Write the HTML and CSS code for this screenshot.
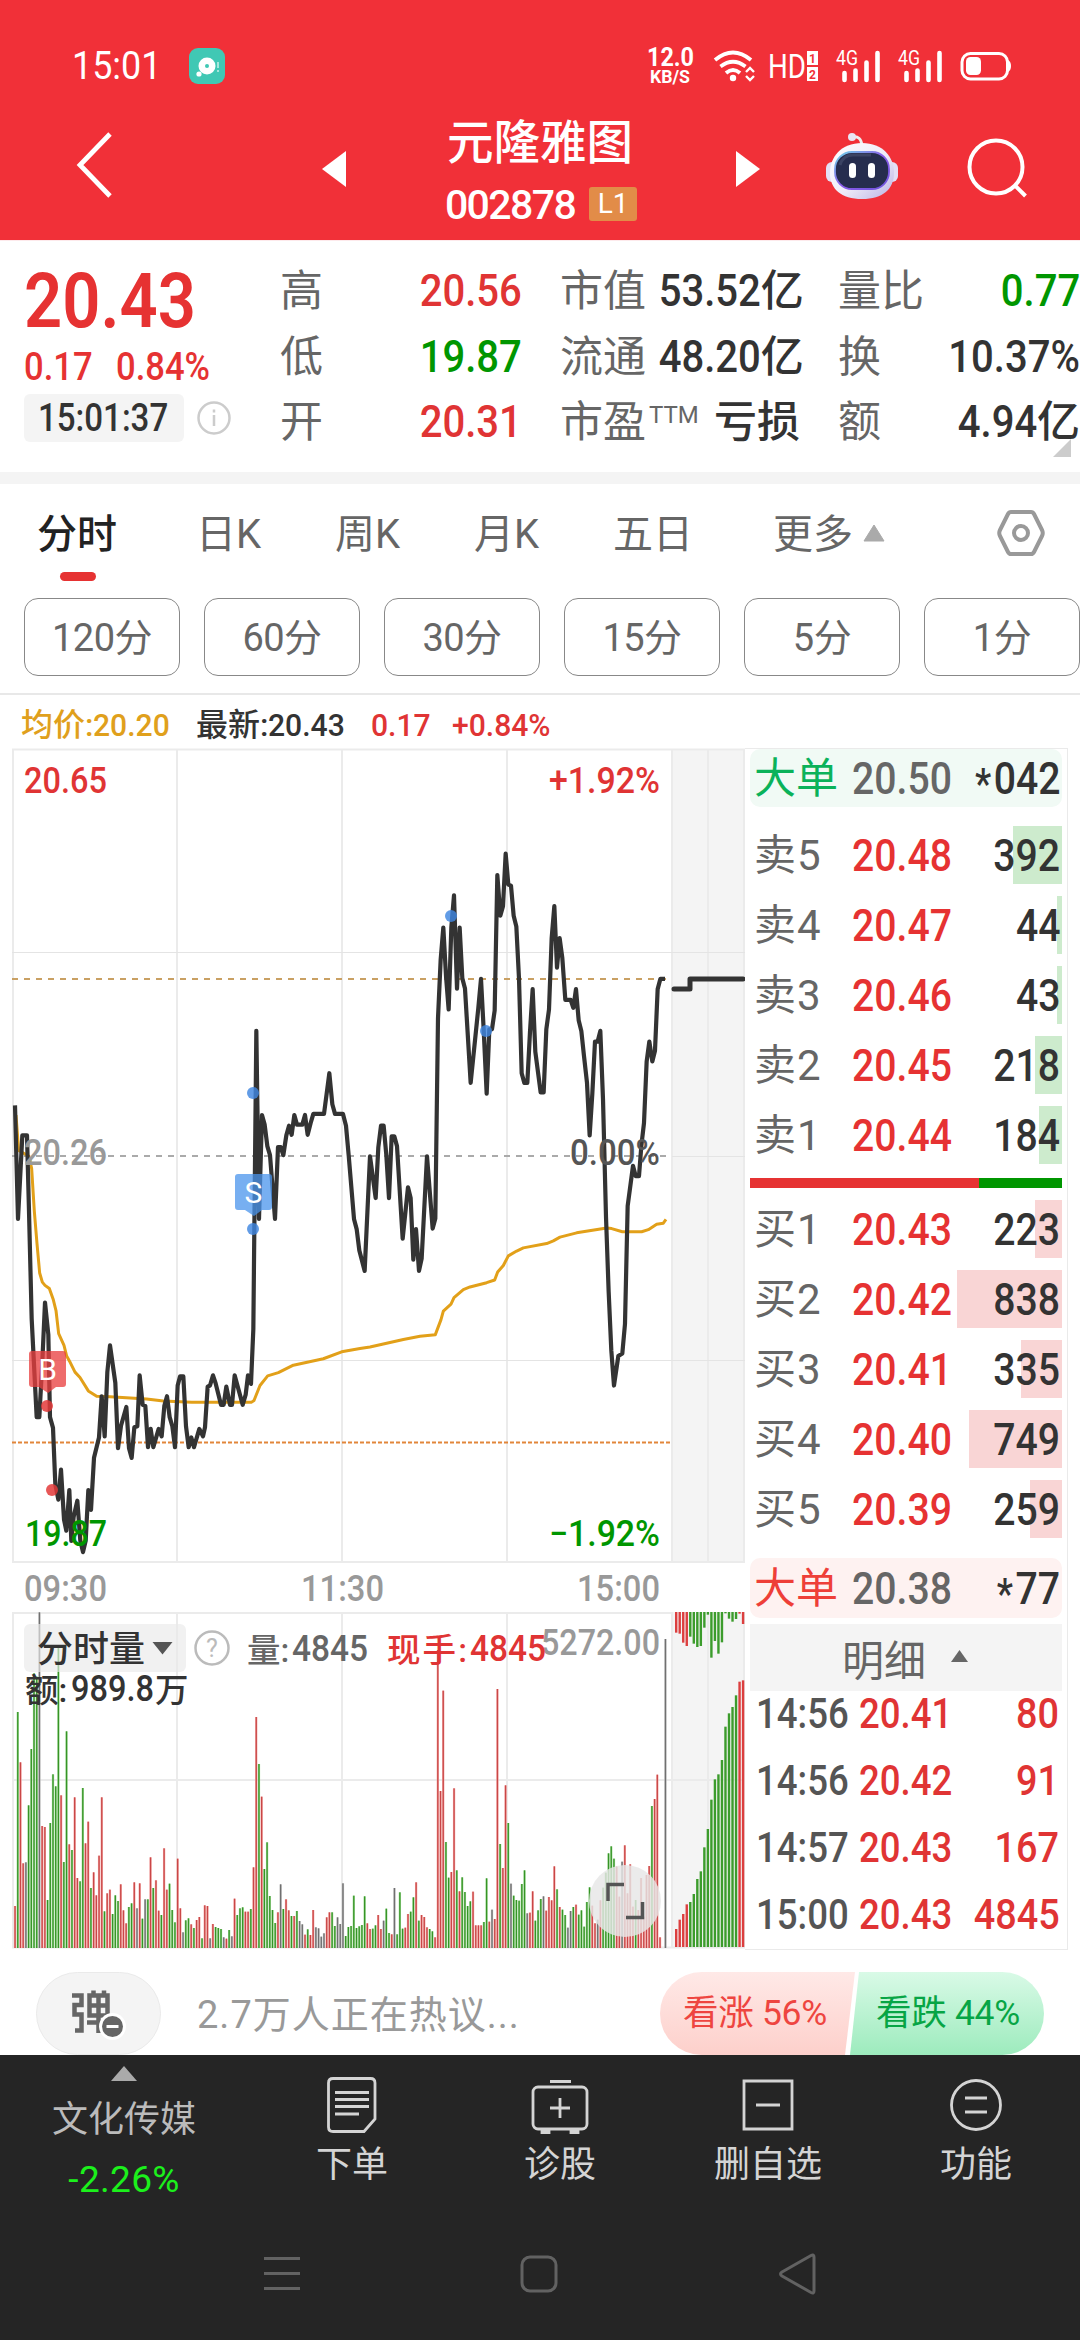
FILE: index.html
```html
<!DOCTYPE html>
<html lang="zh-CN">
<head>
<meta charset="utf-8">
<title>元隆雅图 002878</title>
<link rel="stylesheet" href="styles.css">
</head>
<body>
<header class="top">
  <div class="status">
    <span class="clock"><span class="num">15:01</span></span>
    <svg class="app" width="36" height="36" viewBox="0 0 36 36"><rect width="36" height="36" rx="9" fill="#40c8b4"/><circle cx="18" cy="18" r="8.5" fill="#fff"/><circle cx="18" cy="18" r="2" fill="#40c8b4"/><circle cx="10" cy="26" r="2.6" fill="#fff"/><path d="M29 14v6M29 22v2" stroke="#bfeee6" stroke-width="1.6"/></svg>
    <svg class="signals" width="370" height="44" viewBox="645 44 370 44" fill="#fff">
      <g font-family="Roboto, sans-serif" font-weight="700"><text x="647" y="66" font-size="25" textLength="47" lengthAdjust="spacingAndGlyphs">12.0</text><text x="650" y="83" font-size="18.5" textLength="40" lengthAdjust="spacingAndGlyphs">KB/S</text></g>
      <g fill="none" stroke="#fff" stroke-width="3.8"><path d="M715 60Q733 45 751 60M720.500 66.500Q733 57 745.500 66.500M726 73Q733 67 740 73"/><path d="M746 72l4-4 4 4M746 76l4 4 4-4" stroke-width="2.4"/></g>
      <circle cx="733" cy="78" r="3.2"/>
      <text x="768" y="78" font-family="Roboto, sans-serif" font-size="34" textLength="38" lengthAdjust="spacingAndGlyphs">HD</text>
      <rect x="807" y="51" width="11" height="14"/><rect x="807" y="67" width="11" height="14"/>
      <g fill="#f13038" font-family="Roboto, sans-serif" font-size="12" font-weight="700"><text x="809" y="62.500">1</text><text x="809" y="78.500">2</text></g>
      <g id="cell"><text x="836" y="65" font-family="Roboto, sans-serif" font-size="20.500" textLength="22" lengthAdjust="spacingAndGlyphs">4G</text><path d="M844.500 73v7M855.500 70.500v9.500M866.500 62.500v17.500M877.500 53v27" stroke="#fff" stroke-width="4.600" stroke-linecap="round"/></g>
      <use href="#cell" x="62"/>
      <rect x="962" y="53.500" width="45.500" height="25.500" rx="8.500" fill="none" stroke="#fff" stroke-width="3"/><rect x="966" y="57" width="15" height="18" rx="4.500"/><path d="M1008 60q3 1.500 3 6t-3 6z"/>
    </svg>
  </div>
  <div class="titlebar">
    <svg class="back" width="40" height="68" viewBox="0 0 40 68"><path d="M37 3L7 34l30 31" fill="none" stroke="#fff" stroke-width="4.800"/></svg>
    <svg class="prev" width="24" height="36" viewBox="0 0 24 36"><path d="M0 18L24 0v36z" fill="#fff"/></svg>
    <div class="name"><h1>元隆雅图</h1><p><span class="code">002878</span><span class="level">L1</span></p></div>
    <svg class="next" width="24" height="36" viewBox="0 0 24 36"><path d="M24 18L0 0v36z" fill="#fff"/></svg>
    <svg class="robot" width="76" height="70" viewBox="0 0 76 70">
      <defs><linearGradient id="shell" x2="1" y2="1"><stop offset="0" stop-color="#fff"/><stop offset=".55" stop-color="#eeebf8"/><stop offset="1" stop-color="#b9b2e4"/></linearGradient><linearGradient id="rim" x2="1" y2="1"><stop offset="0" stop-color="#6fd6e8"/><stop offset=".5" stop-color="#8a5be8"/><stop offset="1" stop-color="#6f54dd"/></linearGradient></defs>
      <path d="M28 6q9-2 10 9" fill="none" stroke="#eee" stroke-width="3"/><circle cx="28" cy="6" r="4" fill="#e9e6f3"/>
      <rect x="2" y="31" width="72" height="20" rx="6" fill="#e3dff5"/>
      <path d="M38 12C59 12 70 26 70 42 70 58 59 68 38 68S6 58 6 42C6 26 17 12 38 12z" fill="url(#shell)"/>
      <rect x="11" y="21" width="54" height="37" rx="17" fill="#262d4e" stroke="url(#rim)" stroke-width="1.800"/>
      <path d="M16 34q3-10 13-10h18" stroke="#4a5172" stroke-width="3" fill="none" opacity=".6"/>
      <rect x="25" y="32" width="7" height="15" rx="3.500" fill="#fff"/><rect x="44" y="32" width="7" height="15" rx="3.500" fill="#fff"/>
    </svg>
    <svg class="search" width="64" height="64" viewBox="0 0 64 64" fill="none" stroke="#fff" stroke-width="4"><circle cx="31" cy="31" r="26.500"/><path d="M49.500 49l11 11"/></svg>
  </div>
</header>

<section class="quote">
  <div class="last">
    <strong class="num">20.43</strong>
    <p class="change"><span class="num">0.17</span><span class="num">0.84%</span></p>
    <p class="stamp"><time><span class="num">15:01:37</span></time><svg width="34" height="34" viewBox="0 0 34 34" fill="none" stroke="#ccc" stroke-width="2.500"><circle cx="17" cy="17" r="15.500"/><path d="M17 14v11M17 8.500v3"/></svg></p>
  </div>
  <dl class="stats">
    <div><dt>高</dt><dd class="up"><span class="num">20.56</span></dd></div><div><dt>市值</dt><dd><span class="num">53.52</span>亿</dd></div><div><dt>量比</dt><dd class="down"><span class="num">0.77</span></dd></div>
    <div><dt>低</dt><dd class="down"><span class="num">19.87</span></dd></div><div><dt>流通</dt><dd><span class="num">48.20</span>亿</dd></div><div><dt>换</dt><dd><span class="num">10.37%</span></dd></div>
    <div><dt>开</dt><dd class="up"><span class="num">20.31</span></dd></div><div><dt>市盈<sup>TTM</sup></dt><dd>亏损</dd></div><div><dt>额</dt><dd><span class="num">4.94</span>亿</dd></div>
  </dl>
  <svg class="corner" width="18" height="18"><path d="M18 0v18H0z" fill="#ccc"/></svg>
</section>

<nav class="tabs">
  <span class="on">分时</span><span>日K</span><span>周K</span><span>月K</span><span>五日</span><span>更多<svg width="22" height="18"><path d="M11 1l10 16H1z" fill="#aaa" stroke="#aaa" stroke-linejoin="round"/></svg></span>
  <svg class="gear" width="50" height="48" viewBox="0 0 50 48" fill="none" stroke="#999" stroke-width="4"><path d="M15 3h20q2 0 3 2l8 16q1.500 3 0 6l-8 16q-1 2-3 2H15q-2 0-3-2L4 27q-1.500-3 0-6l8-16q1-2 3-2z"/><circle cx="25" cy="24" r="7"/></svg>
</nav>
<div class="chips"><span>120分</span><span>60分</span><span>30分</span><span>15分</span><span>5分</span><span>1分</span></div>
<div class="legend">
  <span class="avg">均价:<span class="num">20.20</span></span><span>最新:<span class="num">20.43</span></span><span class="up"><span class="num">0.17</span></span><span class="up"><span class="num">+0.84%</span></span>
</div>

<main class="board">
  <svg class="chart" width="745" height="1205" viewBox="0 746 745 1205">
    <rect x="671" y="749" width="74" height="813" fill="#f4f4f4"/><rect x="671" y="1612" width="74" height="336" fill="#f4f4f4"/>
    <g class="grid">
      <path d="M13 749V1562M177 749V1562M342 749V1562M507 749V1562M672 749V1562M708 749V1562M744 749V1562M12 749.500H745M12 1562H745"/>
      <path d="M13 1612V1948M177 1612V1948M342 1612V1948M507 1612V1948M672 1612V1948M708 1612V1948M744 1612V1948M12 1613H672M12 1780H745M12 1947.500H745"/>
      <path class="thin" d="M12 952.500H745M12 1360.500H745M672 1156.500H745"/>
    </g>
    <path d="M12 979H666" stroke="#c9a063" stroke-width="2" stroke-dasharray="6 6"/>
    <path d="M12 1156H666" stroke="#aaa" stroke-width="2" stroke-dasharray="6 6"/>
    <path d="M12 1442.500H672" stroke="#e2863a" stroke-width="2" stroke-dasharray="4 2"/>
    <g id="bars"></g>
    <g transform="translate(0 740) scale(.33333 .53571)">
      <polyline class="avgline" points="48,700 56,766 87,777 95,800 103,880 111,940 119,995 127,1012 135,1018 148,1024 160,1045 168,1065 176,1108 192,1130 200,1150 209,1160 225,1180 240,1190 265,1215 290,1225 330,1226 440,1230 490,1234 575,1236 755,1236 762,1233 780,1205 803,1187 835,1181 880,1167 970,1155 1025,1142 1080,1136 1110,1133 1160,1126 1210,1119 1260,1113 1306,1110 1323,1082 1330,1066 1353,1053 1362,1041 1390,1026 1410,1021 1460,1013 1484,1008 1493,993 1510,981 1525,963 1550,954 1570,948 1640,940 1660,935 1680,928 1730,920 1820,911 1835,912 1867,918 1925,918 1945,914 1970,904 1990,902 1998,895"/>
      <polyline class="price" points="45,682 54,894 67,738 81,738 87,880 95,1080 110,1264 118,1264 127,1160 135,1050 145,1110 150,1264 159,1284 166,1390 175,1418 183,1362 192,1455 199,1476 208,1400 214,1495 221,1450 232,1420 241,1495 249,1516 257,1495 265,1400 273,1437 282,1340 297,1302 305,1225 314,1300 322,1180 330,1130 346,1200 354,1322 363,1280 379,1245 387,1322 395,1340 403,1283 412,1281 419,1186 428,1241 436,1243 444,1320 452,1286 460,1320 476,1286 485,1300 493,1243 501,1225 509,1264 517,1281 525,1320 533,1205 540,1188 550,1188 558,1281 566,1320 574,1302 582,1320 598,1286 609,1300 615,1283 623,1207 630,1205 639,1186 647,1201 663,1241 671,1241 679,1207 690,1241 696,1241 704,1186 728,1241 737,1222 744,1186 753,1202 760,1100 769,543 777,894 786,700 794,718 802,758 810,775 825,894 834,760 842,760 850,775 859,738 867,720 875,737 883,700 891,718 907,718 915,700 923,737 932,715 940,698 972,698 988,622 997,680 1005,698 1029,698 1038,720 1046,775 1062,894 1070,913 1078,953 1094,991 1110,777 1127,855 1135,760 1143,720 1151,720 1159,775 1167,855 1175,740 1183,740 1191,758 1208,931 1224,835 1232,855 1240,970 1248,913 1257,991 1265,968 1281,777 1298,912 1306,893 1314,520 1322,410 1330,350 1338,440 1346,503 1354,350 1362,290 1371,464 1379,350 1387,445 1395,464 1412,640 1435,500 1443,446 1451,540 1460,660 1468,540 1476,540 1484,505 1492,252 1501,328 1509,310 1517,212 1525,270 1533,272 1541,328 1549,348 1557,445 1565,622 1573,640 1582,640 1590,545 1598,465 1606,582 1622,658 1631,658 1639,540 1647,503 1655,370 1663,310 1671,425 1679,370 1687,407 1696,485 1712,485 1720,500 1728,465 1736,523 1744,543 1752,590 1761,640 1769,738 1777,660 1785,563 1793,563 1801,543 1809,670 1818,890 1826,1030 1834,1140 1842,1205 1855,1150 1867,1145 1875,1090 1883,870 1899,795 1907,814 1917,814 1924,758 1932,715 1940,600 1948,563 1957,600 1965,580 1973,465 1981,446 1995,446"/>
    </g>
    <path d="M674 989H690V979H743" fill="none" stroke="#333" stroke-width="5" stroke-linecap="round" stroke-linejoin="round"/>
    <g fill="#3f86e0" fill-opacity=".82"><circle cx="253" cy="1093" r="6"/><circle cx="253" cy="1229" r="6"/><circle cx="451" cy="916" r="6"/><circle cx="486" cy="1031" r="6"/></g>
    <g fill="#e33a3a" fill-opacity=".85"><circle cx="47" cy="1406" r="6"/><circle cx="52" cy="1490" r="6"/></g>
    <path d="M238 1174h31q3 0 3 3v30q0 3-3 3h-7l-8 6-9-6h-7q-3 0-3-3v-30q0-3 3-3z" fill="#4a94ec" fill-opacity=".75"/>
    <path d="M32 1351h31q3 0 3 3v30q0 3-3 3h-7l-8 6-9-6h-7q-3 0-3-3v-30q0-3 3-3z" fill="#e83e3e" fill-opacity=".76"/>
    <g fill="#fff" font-family="Roboto, sans-serif" font-size="30" text-anchor="middle"><text x="253.500" y="1203">S</text><text x="47.500" y="1380">B</text></g>
    <g class="lab">
      <text class="up" x="24" y="792.500" textLength="83" lengthAdjust="spacingAndGlyphs">20.65</text><text class="up" x="549" y="792.500" textLength="111" lengthAdjust="spacingAndGlyphs">+1.92%</text>
      <text class="g9" x="24" y="1165" textLength="83" lengthAdjust="spacingAndGlyphs">20.26</text><text class="g5" x="570" y="1165" textLength="90" lengthAdjust="spacingAndGlyphs">0.00%</text>
      <text class="down" x="25" y="1546" textLength="82" lengthAdjust="spacingAndGlyphs">19.87</text><text class="down" x="549" y="1546" textLength="111" lengthAdjust="spacingAndGlyphs">−1.92%</text>
      <text class="g9" x="24" y="1601" textLength="83" lengthAdjust="spacingAndGlyphs">09:30</text><text class="g9" x="301" y="1601" textLength="83" lengthAdjust="spacingAndGlyphs">11:30</text><text class="g9" x="577" y="1601" textLength="83" lengthAdjust="spacingAndGlyphs">15:00</text>
    </g>
    <rect x="24" y="1624" width="162" height="48" rx="6" fill="#e9e9e9" fill-opacity=".65"/>
    <path d="M152.500 1642h20l-10 12.500z" fill="#555"/>
    <circle cx="212" cy="1648" r="16.500" fill="none" stroke="#bbb" stroke-width="2.500"/><text x="212" y="1657" font-family="Roboto, sans-serif" font-size="25" fill="#bbb" text-anchor="middle">?</text>
    <g class="cjk"><text x="37" y="1662" font-size="36">分时量</text><text class="g6" x="247" y="1662">量:</text><text class="up" x="387" y="1662" textLength="80">现手:</text><text x="25" y="1702">额:</text><text x="155" y="1702">万</text></g>
    <g class="lab">
      <text class="g9" x="541" y="1655" textLength="119" lengthAdjust="spacingAndGlyphs">5272.00</text>
      <text class="g6" x="292" y="1661" textLength="76" lengthAdjust="spacingAndGlyphs">4845</text><text class="up" x="470" y="1661" textLength="76" lengthAdjust="spacingAndGlyphs">4845</text><text class="g3" x="71" y="1701" textLength="83" lengthAdjust="spacingAndGlyphs">989.8</text>
    </g>
    <circle cx="625" cy="1901" r="36" fill="#e6e6e6" fill-opacity=".82"/><path d="M608 1901v-16.500h16M626 1917.500h16.500V1902" fill="none" stroke="#555" stroke-width="3.500"/>
  </svg>

  <aside class="book">
    <div class="row big sell"><b>大单</b><i class="num">20.50</i><em class="num"><span class="star">*</span>042</em></div>
    <div class="side">
      <div class="row" style="--w:49px"><b>卖5</b><i class="num">20.48</i><em class="num">392</em></div>
      <div class="row" style="--w:5px"><b>卖4</b><i class="num">20.47</i><em class="num">44</em></div>
      <div class="row" style="--w:5px"><b>卖3</b><i class="num">20.46</i><em class="num">43</em></div>
      <div class="row" style="--w:27px"><b>卖2</b><i class="num">20.45</i><em class="num">218</em></div>
      <div class="row" style="--w:23px"><b>卖1</b><i class="num">20.44</i><em class="num">184</em></div>
    </div>
    <div class="ratio"></div>
    <div class="side buys">
      <div class="row" style="--w:27px"><b>买1</b><i class="num">20.43</i><em class="num">223</em></div>
      <div class="row" style="--w:105px"><b>买2</b><i class="num">20.42</i><em class="num">838</em></div>
      <div class="row" style="--w:41px"><b>买3</b><i class="num">20.41</i><em class="num">335</em></div>
      <div class="row" style="--w:93px"><b>买4</b><i class="num">20.40</i><em class="num">749</em></div>
      <div class="row" style="--w:32px"><b>买5</b><i class="num">20.39</i><em class="num">259</em></div>
    </div>
    <div class="row big buy"><b>大单</b><i class="num">20.38</i><em class="num"><span class="star">*</span>77</em></div>
    <div class="more">明细<svg width="17" height="12"><path d="M8.500 0L17 12H0z" fill="#666"/></svg></div>
    <div class="ticks">
      <div><b class="num">14:56</b><i class="num">20.41</i><em class="num">80</em></div>
      <div><b class="num">14:56</b><i class="num">20.42</i><em class="num">91</em></div>
      <div><b class="num">14:57</b><i class="num">20.43</i><em class="num">167</em></div>
      <div><b class="num">15:00</b><i class="num">20.43</i><em class="num">4845</em></div>
    </div>
  </aside>
</main>

<section class="talk">
  <div class="danmu"><svg width="60" height="60" viewBox="0 0 60 60"><g fill="none" stroke="#666" stroke-width="4.500"><path d="M3 7.500h9.500V17H5.500V26.500H12.500V42.500H6"/><path d="M20.500 7.500H38.500V27.500H20.500zM20.500 17.500H38.500M29.500 7v38M18 34.500H42M24.500 2.500v5M35 2.500v5"/></g><circle cx="43.500" cy="38.500" r="13.500" fill="#fff"/><circle cx="43.500" cy="38.500" r="10.500" fill="#666"/><path d="M37.500 38.500h12" stroke="#fff" stroke-width="3"/></svg></div>
  <p>2.7万人正在热议...</p>
  <div class="vote"><span class="bull">看涨 56%</span><span class="bear">看跌 44%</span></div>
</section>

<footer>
  <div class="menu">
    <div class="sector"><svg width="26" height="15"><path d="M13 0l13 15H0z" fill="#aaa"/></svg><span>文化传媒</span><span class="pct">-2.26%</span></div>
    <div><svg width="60" height="60" viewBox="0 0 60 60"><path d="M11 3.500H48.500Q53 3.500 53 8V44L42 56.500H11Q6.500 56.500 6.500 52V8Q6.500 3.500 11 3.500zM13 17.500H47M13 24.500H47M13 31.500H47M13 39H37"/></svg><span>下单</span></div>
    <div><svg width="60" height="60" viewBox="0 0 60 60"><rect x="3" y="12" width="54" height="42" rx="5"/><path d="M20 6.500H41M30 23V43M20 33H40M12 55.500v2h7v-2zM41 55.500v2h7v-2z"/></svg><span>诊股</span></div>
    <div><svg width="60" height="60" viewBox="0 0 60 60"><path d="M6 6H54V54H6zM18 30H42"/></svg><span>删自选</span></div>
    <div><svg width="60" height="60" viewBox="0 0 60 60"><circle cx="30" cy="30" r="24.500"/><path d="M19 23H41M19 37H41"/></svg><span>功能</span></div>
  </div>
  <div class="system">
    <svg width="40" height="44" viewBox="0 0 40 44"><path d="M2 6.500H38M2 21.500H38M2 36.500H38"/></svg>
    <svg width="40" height="44" viewBox="0 0 40 44"><rect x="3" y="5" width="34" height="34" rx="8"/></svg>
    <svg width="44" height="44" viewBox="0 0 44 44"><path d="M6 20L35 3.500Q38 2 38 5V39Q38 42 35 40.500L6 24Q3 22 6 20z"/></svg>
  </div>
</footer>
<script src="chart.js"></script>
</body>
</html>
```
FILE: styles.css
```css
* { box-sizing: border-box; margin: 0; padding: 0; }
body { width: 1080px; height: 2340px; overflow: hidden; background: #fff; color: #333; font-family: Roboto, "Noto Sans CJK SC", sans-serif; }
svg { display: block; flex: none; }
b, i, em { font-style: normal; font-weight: inherit; }
.num { display: inline-block; font-weight: 500; transform: scaleX(.87); transform-origin: left; white-space: nowrap; }
.up { color: #e03434; fill: #e03434; }
.down { color: #009600; fill: #009600; }

.top { height: 240px; background: #f13038; color: #fff; padding-top: 44px; }
.status { display: flex; align-items: center; height: 44px; padding-left: 72px; }
.clock { width: 117px; font-size: 39px; }
.clock .num { font-weight: 400; transform: scaleX(.92); }
.signals { margin-left: 420px; }
.titlebar { display: flex; align-items: flex-start; height: 140px; }
.back { margin: 43px 0 0 73px; }
.prev { margin: 63px 0 0 209px; }
.name { width: 390px; text-align: center; padding-top: 25px; }
.name h1 { font-size: 46.500px; line-height: 60px; font-weight: 500; margin-left: -2px; }
.name p { display: flex; justify-content: center; align-items: center; gap: 14px; height: 38px; margin-top: 12px; }
.code { font-size: 41px; font-weight: 500; letter-spacing: -1.6px; position: relative; top: 1px; }
.level { width: 48px; height: 34px; border-radius: 3px; background: #e28c48; font-size: 28px; line-height: 34px; }
.next { margin-top: 63px; }
.robot { margin: 43px 0 0 64px; }
.search { margin: 48px 0 0 65px; }

.quote { display: flex; position: relative; height: 244px; border-bottom: 12px solid #f4f4f4; border-top: 1px solid #fdeaec; }
.last { width: 280px; padding: 22px 0 0 24px; color: #e63232; }
.last > strong { display: block; font-size: 76px; line-height: 76px; font-weight: 600; transform: scaleX(.88); }
.change { display: flex; margin-top: 6px; font-size: 38px; line-height: 44px; }
.change .num:first-child { width: 92px; }
.change .num { transform: scaleX(.91); }
.stamp { display: flex; align-items: center; gap: 13px; margin-top: 5px; }
.stamp time { width: 160px; height: 48px; padding-left: 14px; border-radius: 6px; background: #f4f4f4; color: #333; font-size: 38px; line-height: 48px; }
.stats { display: grid; grid-template-columns: 242px 240px 242px; grid-template-rows: repeat(3, 65.500px); column-gap: 38px; padding-top: 17px; font-size: 43px; line-height: 66px; }
.stats div { display: flex; justify-content: space-between; white-space: nowrap; }
.stats dt { color: #666; }
.stats dd { font-weight: 500; }
.stats .num { transform: scaleX(.89); transform-origin: right; font-size: 45px; }
.stats sup { font-size: 24px; font-weight: 400; vertical-align: 14px; line-height: 0; margin-left: 3px; }
.corner { position: absolute; right: 9px; bottom: 15px; }

.tabs { display: flex; align-items: center; height: 114px; padding: 0 0 12px 37px; font-size: 40px; color: #666; white-space: nowrap; }
.tabs span { width: 139px; line-height: 58px; }
.tabs span:nth-child(1) { width: 159px; padding-top: 17px; }
.tabs .on { color: #222; font-weight: 500; }
.tabs .on::after { content: ""; display: block; width: 36px; height: 9px; margin: 8px 0 0 23px; border-radius: 4.500px; background: #e63232; }
.tabs span:nth-child(5) { width: 160px; }
.tabs span:nth-child(6) { width: 223px; display: flex; align-items: center; gap: 10px; }
.tabs span svg { margin-top: -4px; }
.gear { margin-top: -5px; }
.chips { display: flex; gap: 24px; height: 97px; padding-left: 24px; border-bottom: 2px solid #e8e8e8; }
.chips span { flex: none; width: 156px; height: 78px; border: 1px solid #888; border-radius: 14px; color: #666; font-size: 38px; line-height: 79px; text-align: center; letter-spacing: -.5px; }
.legend { display: flex; height: 51px; padding: 3px 0 0 21px; font-size: 32px; line-height: 54px; font-weight: 500; white-space: nowrap; }
.legend > span { width: 175px; }
.legend > span:nth-child(3) { width: 81px; }
.legend .num { transform: scaleX(.94); }
.legend .avg { color: #e0a01c; }

.board { display: flex; height: 1205px; }
.grid path { fill: none; stroke: #ebebeb; stroke-width: 2; }
.grid .thin { stroke: #e4e4e4; stroke-width: 1; }
.price, .avgline { fill: none; stroke: #333; stroke-width: 4.200px; stroke-linejoin: round; vector-effect: non-scaling-stroke; }
.avgline { stroke: #e2a019; stroke-width: 3px; }
.lab { font: 500 36px Roboto, sans-serif; }
.lab text { font-size: 36px; }
.chart .cjk { font-family: Roboto, "Noto Sans CJK SC", sans-serif; font-size: 33.500px; font-weight: 500; fill: #333; }
.lab .g3 { fill: #333; }
.g5 { fill: #555; }
.g6 { fill: #666; }
.g9 { fill: #999; }

.book { width: 323px; height: 1202px; padding: 0 5px; border: 1px solid #eaeaea; border-left: 0; margin-top: 2px; font-size: 45px; }
.row { display: grid; grid-template-columns: 98px 100px 1fr; height: 58px; line-height: 60px; padding-left: 4px; background: linear-gradient(#cdebcd, #cdebcd) right / var(--w, 0) 100% no-repeat; }
.row b { color: #666; font-size: 42px; white-space: nowrap; letter-spacing: 1px; }
.row i { color: #e63232; }
.row em { justify-self: end; transform-origin: right; padding-right: 2px; }
.star { font-size: 42px; vertical-align: -4px; line-height: 0; margin-right: 3px; }
.side { display: flex; flex-direction: column; gap: 12px; margin-top: 19px; }
.buys { margin-top: 12px; }
.buys .row { background-image: linear-gradient(#f9d5d5, #f9d5d5); }
.ratio { height: 10px; margin-top: 14px; background: linear-gradient(90deg, #e63232 229px, #009600 229px); }
.big { border-radius: 10px; }
.big b, .big i { letter-spacing: 0; color: #666; }
.sell { background: #f1faf5; }
.sell b { color: #0bb25a; }
.buy { background: #fef2f1; height: 60px; line-height: 62px; margin-top: 20px; }
.buy b { color: #ee3f38; }
.more { display: flex; align-items: center; justify-content: center; gap: 25px; height: 67px; margin-top: 6px; padding-right: 2px; background: #f4f4f4; color: #666; font-size: 42px; }
.more svg { margin-top: -3px; }
.ticks { line-height: 67px; font-size: 42px; margin-top: -11px; }
.ticks div { display: grid; grid-template-columns: 103px 100px 1fr; height: 67px; padding-left: 6px; color: #e03434; }
.ticks b { color: #555; }
.ticks em { justify-self: end; transform: scaleX(.9); transform-origin: right; padding-right: 3px; }

.talk { display: flex; height: 104px; padding: 21px 36px 0; align-items: stretch; }
.danmu { width: 125px; border: 1px solid #eaeaea; border-radius: 42px; background: #f4f4f4; padding: 15px 0 0 32px; }
.talk p { width: 499px; padding-left: 36px; font-size: 38px; letter-spacing: 1px; line-height: 87px; color: #999; }
.vote { display: flex; width: 384px; font-size: 35.500px; line-height: 83px; white-space: nowrap; }
.vote span { height: 83px; letter-spacing: -.3px; }
.bull { width: 195px; padding-left: 23px; border-radius: 42px 0 0 42px; color: #ee4540; background: linear-gradient(#ffe9e7, #fdd0cb); clip-path: polygon(0 0, 100% 0, 185px 100%, 0 100%); }
.bear { width: 194px; margin-left: -5px; padding-left: 26px; border-radius: 0 42px 42px 0; color: #07a545; background: linear-gradient(#d9fae7, #9debbd); clip-path: polygon(9px 0, 100% 0, 100% 100%, 0 100%); }

footer { height: 285px; background: #252525; color: #d4d4d4; font-size: 36px; }
.menu { display: flex; height: 165px; padding-left: 20px; }
.menu > div { width: 208px; padding-top: 20px; display: flex; flex-direction: column; align-items: center; line-height: 54px; }
.menu > .sector { padding-top: 11px; color: #bbb; }
.menu svg { fill: none; stroke: #d4d4d4; stroke-width: 2.800; }
.menu > div:not(.sector) span { margin-top: 3px; }
.menu .sector svg { stroke: none; }
.sector { margin-right: 20px; }
.sector span { margin-top: 12px; }
.menu .pct { color: #1cf01c; font-size: 37px; margin-top: 6px; letter-spacing: .3px; }
.system { display: flex; justify-content: space-between; width: 558px; margin: 32px 0 0 262px; }
.system svg { fill: none; stroke: #626262; stroke-width: 3; }
```
FILE: chart.js
```js
// One entry per minute: colour code (r up, g down, k flat) and height in thirds of a pixel.
const volume = `r126 g708 r557 r254 k257 g428 g597 g824 g814 k1007 r366 r363 g144 g375 g521 g485 g907 r458 g258 g650 r311 g294 r452 r210 g200 g480 r314 r379 g180 r227 r158 r277 r452 g110 r164 r175 g102 g158 g141 r191 r113 r74 g123 g134 r197 k119 r194 g88 k146 g146 r272 g180 r203 r112 g99 r299 r175 g193 g114 g77 r268 r119 k47 g83 g89 r71 g60 r84 r93 g29 r128 r126 k29 r72 g63 g60 g57 k32 r28 g54 k35 r148 g99 g119 g122 r109 r109 g117 r242 r693 g552 r454 g237 g317 g156 g114 g75 r107 k191 g117 r146 r113 g96 r96 g111 k81 k71 r40 g56 r39 r114 k62 k59 k34 k44 r92 r107 g107 g66 k92 k72 k194 g36 g63 g66 g157 g60 g65 g69 g155 r74 r57 g58 g68 r99 r57 k82 g118 g45 r41 k180 g41 g167 g58 r61 r102 g109 g152 r197 g82 r99 r93 r62 g57 g50 r32 r894 r471 r772 g318 g211 r228 r479 g233 r170 g212 g168 g126 g140 r169 r68 r68 r68 g78 g209 r79 k115 r87 r777 g312 r240 r488 g375 k193 g157 g144 g142 g192 g233 k104 r106 r170 g82 g113 g147 k155 r112 r153 r143 r245 g176 r123 g115 g99 k61 k111 g123 r130 g100 g113 g64 g138 g182 r127 r74 k85 r143 g181 g226 g284 g305 g268 r244 r154 k259 r308 r164 r251 r124 g144 r114 r210 r94 r219 r246 g426 r447 r520 r32 k0 k927`.split(' ');
const matched = [54, 82, 99, 128, 135, 159, 204, 227, 299, 354, 442, 503, 518, 561, 661, 701, 720, 755, 796, 800];
const unmatched = [62, 65, 92, 102, 74, 95, 105, 102, 47, 8, 137, 87, 125, 91, 4, 20, 29, 21, 5, 36];
const ink = { r: '#c94747', g: '#369426', k: '#707070' };
const tint = { r: '#f5aaa8', g: '#a9dda0', k: '#c4c4c4' };
const layer = document.getElementById('bars');

function bar(x, y, width, height, fill) {
  const r = document.createElementNS('http://www.w3.org/2000/svg', 'rect');
  for (const [k, v] of Object.entries({ x, y, width, height, fill })) r.setAttribute(k, v);
  layer.appendChild(r);
}
volume.forEach((v, i) => {
  const h = v.slice(1) / 3, x = 15 + i * 2.71;
  bar(x - 1.1, 1948 - h, 2.3, h, tint[v[0]]);
  bar(x - 0.6, 1948 - h, 1.3, h, ink[v[0]]);
});
matched.forEach((m, i) => {
  const x = 675 + i * 3.52, c = i < 4 || i > 17 ? '#dc3f3f' : '#3c9c2c';
  bar(x, 1947 - m / 3, 2.4, m / 3, c);
  const down = [4, 5, 6, 7, 8, 9, 10, 11, 12, 13, 14, 15, 16, 17].includes(i);
  bar(x, 1612, 2.4, unmatched[i] / 3, down ? '#3c9c2c' : '#dc3f3f');
});
```
